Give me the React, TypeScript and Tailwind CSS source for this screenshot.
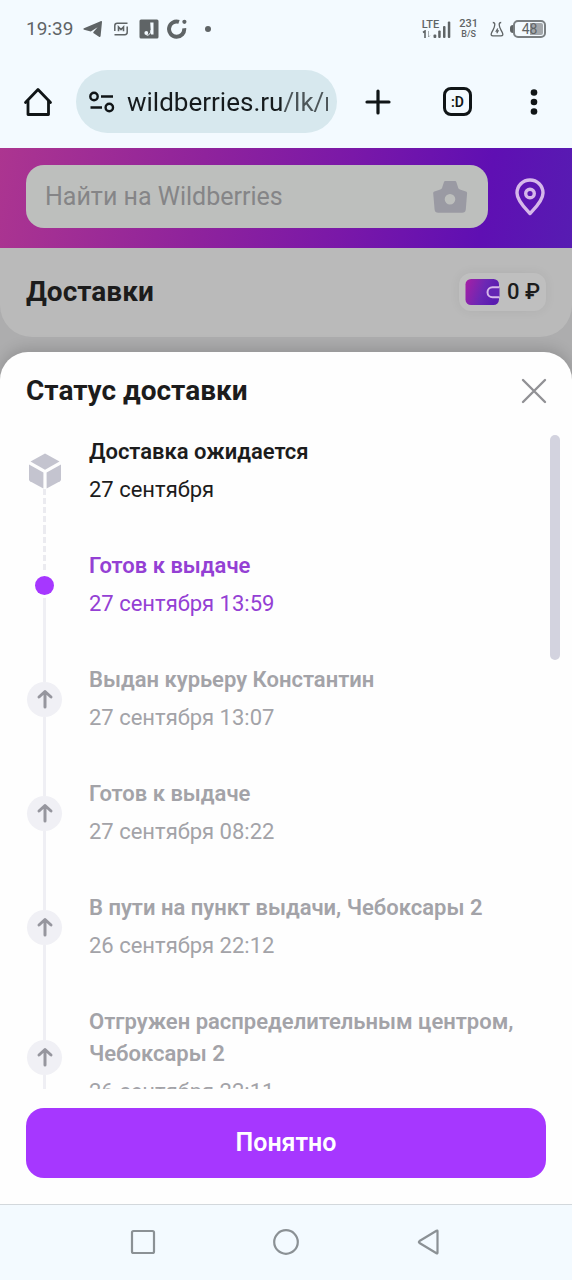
import React from "react";
import clsx from "clsx";

type StepKind = "expected" | "current" | "past";

interface Step {
  title: string;
  date: string;
  kind: StepKind;
}

const steps: Step[] = [
  { title: "Доставка ожидается", date: "27 сентября", kind: "expected" },
  { title: "Готов к выдаче", date: "27 сентября 13:59", kind: "current" },
  { title: "Выдан курьеру Константин", date: "27 сентября 13:07", kind: "past" },
  { title: "Готов к выдаче", date: "27 сентября 08:22", kind: "past" },
  { title: "В пути на пункт выдачи, Чебоксары 2", date: "26 сентября 22:12", kind: "past" },
  { title: "Отгружен распределительным центром, Чебоксары 2", date: "26 сентября 22:11", kind: "past" },
];

const StatusBar = () => (
  <div className="flex h-[58px] shrink-0 items-center justify-between px-[26px] text-[#5f6466]">
    <div className="flex items-center">
      <span className="text-[19px] leading-6">19:39</span>
      <svg className="ml-2.5 h-5 w-5" viewBox="0 0 20 20" fill="currentColor">
        <path d="M1 9.300 17.600 2.200c.7-.3 1.500.1 1.400.9L17.600 17c-.1.900-.9 1.200-1.600.8l-5.300-3.500c-.6-.4-.6-1-.1-1.500l4-4.600-6.400 4c-.5.3-.9.300-1.400.1l-5.700-1.500C.2 10.500.2 9.700 1 9.300z" />
      </svg>
      <svg className="ml-2.5 h-4 w-4" viewBox="0 0 16 16" fill="none" stroke="currentColor" strokeWidth="1.500">
        <path d="M14.500 2.300H4.200Q1.800 2.300 1.800 4.700V10M1.500 13.700h10.300q2.400 0 2.400-2.400V5.500" />
        <path d="M5.500 10.300V6l2.500 2.500L10.500 6v4.300" strokeWidth="1.600" />
      </svg>
      <svg className="ml-2.5 h-5 w-5" viewBox="0 0 20 20">
        <rect x="0.500" y="0.500" width="19" height="19" rx="1.500" fill="currentColor" />
        <path d="M11.200 3.500h3.300v12h-2.500z" fill="#f3faff" />
        <path d="M12 11c0 3.500-2 5.300-4.300 5.300" fill="none" stroke="#f3faff" strokeWidth="1" />
        <circle cx="7.300" cy="14" r="1.900" fill="#f3faff" />
      </svg>
      <svg className="ml-2 h-5 w-5" viewBox="0 0 20 20">
        <path d="M12 2.900A7.600 7.600 0 1 0 17.200 9.300" fill="none" stroke="currentColor" strokeWidth="4" />
        <circle cx="17.400" cy="2.800" r="2.100" fill="currentColor" />
      </svg>
      <span className="ml-[18px] h-[6px] w-[6px] rounded-full bg-[#5f6466]" />
    </div>
    <div className="flex items-center">
      <div className="flex items-end">
        <div className="flex flex-col">
          <span className="text-[11px] leading-[10px] font-medium">LTE</span>
          <svg className="h-2 w-3" viewBox="0 0 12 8" fill="none" stroke="currentColor">
            <path d="M1 2.500 3 1v7" strokeWidth="1.600" />
            <path d="M6.500 1v6l1.500-1.500" strokeWidth="1" opacity="0.5" />
          </svg>
        </div>
        <svg className="-ml-1.5 h-[17px] w-[18px]" viewBox="0 0 18 17" fill="currentColor">
          <rect x="0.500" y="13.500" width="2.800" height="3.500" rx="1" />
          <rect x="5.200" y="9.500" width="2.500" height="7.500" rx="1" />
          <rect x="10" y="5" width="2.500" height="12" rx="1" />
          <rect x="14.800" y="0.500" width="2.500" height="16.500" rx="1" />
        </svg>
      </div>
      <div className="ml-2 flex flex-col items-center">
        <span className="text-[11px] leading-[10px] font-medium">231</span>
        <span className="text-[9px] leading-[10px] font-medium">B/S</span>
      </div>
      <svg className="ml-3 h-4 w-3.5" viewBox="0 0 14 16" fill="none" stroke="currentColor" strokeWidth="1.300">
        <path d="M2.800 1.500c1.500 0 2 .6 2 2 0 3-1.300 4.300-3.300 8.500-.8 1.800-.2 2.800 1.500 2.800h8c1.700 0 2.300-1 1.500-2.800-2-4.200-3.300-5.500-3.300-8.500 0-1.400.5-2 2-2" />
        <path d="M7.800 7.500 6.300 10h1.800l-1.300 2.300" />
      </svg>
      <div className="ml-1.5 flex items-center">
        <span className="h-2 w-[3px] rounded-l-sm bg-[#5f6466]" />
        <span className="flex h-[18px] w-[33px] items-center justify-center rounded-[5px] border-2 border-[#7a7f82] bg-[linear-gradient(to_right,transparent_52%,#a3a7ab_52%)] bg-clip-content p-px text-[14px] leading-3">
          48
        </span>
      </div>
    </div>
  </div>
);

const BrowserBar = () => (
  <div className="flex h-[90px] shrink-0 items-center pr-[30px] pb-[3px] pl-[22px] text-[#101517]">
    <button aria-label="Home" className="shrink-0">
      <svg className="h-8 w-8" viewBox="0 0 32 32" fill="none" stroke="currentColor" strokeWidth="2.800" strokeLinecap="round" strokeLinejoin="round">
        <path d="M3.500 16.500 16 3.500l12.500 13" />
        <path d="M6 15v13.500h20.500V15" />
      </svg>
    </button>
    <label className="ml-[22px] flex h-[63px] min-w-0 flex-1 items-center rounded-full bg-[#d7e8ee] pr-[9px] pl-[13px]">
      <svg className="h-[22px] w-[26px] shrink-0" viewBox="0 0 26 22" fill="none" stroke="currentColor" strokeWidth="2.400">
        <circle cx="5" cy="5.500" r="3.700" />
        <path d="M12 5.500h12M1.500 16.500h11.500" />
        <circle cx="20.300" cy="16.500" r="3.700" />
      </svg>
      <input
        type="text"
        aria-label="Address"
        defaultValue="wildberries.ru/lk/m"
        className="ml-3 w-full min-w-0 flex-1 bg-[linear-gradient(to_right,#161b1d_77%,#4c5558_78%)] bg-clip-text text-[26px] leading-8 text-transparent outline-none"
      />
    </label>
    <button aria-label="New tab" className="ml-[27px] shrink-0">
      <svg className="h-7 w-7" viewBox="0 0 28 28" stroke="currentColor" strokeWidth="3.200" strokeLinecap="round">
        <path d="M14 3v22M3 14h22" />
      </svg>
    </button>
    <button aria-label="Tabs" className="ml-[51px] flex h-[29px] w-[29px] shrink-0 items-center justify-center rounded-[8px] border-3 border-[#101517] text-[14px] leading-4 font-semibold">
      :D
    </button>
    <button aria-label="Menu" className="ml-[54px] shrink-0">
      <svg className="h-7 w-4" viewBox="0 0 16 28" fill="currentColor">
        <circle cx="8" cy="4.500" r="3.300" />
        <circle cx="8" cy="14" r="3.300" />
        <circle cx="8" cy="23.500" r="3.300" />
      </svg>
    </button>
  </div>
);

const SiteHeader = () => (
  <header className="flex h-[100px] shrink-0 items-center bg-[linear-gradient(100deg,#ac3590_0%,#8f239c_35%,#7a18a8_60%,#5f0fb3_84%,#571cb2_100%)] pr-6 pb-[3px] pl-[26px]">
    <div className="flex h-[63px] flex-1 items-center rounded-[18px] bg-[#bdbfbd] pr-5 pl-[19px]">
      <input
        type="search"
        aria-label="Поиск"
        placeholder="Найти на Wildberries"
        className="min-w-0 flex-1 text-[25px] leading-8 outline-none placeholder:text-[#858587]"
      />
      <button aria-label="Поиск по фото">
        <svg className="h-9 w-9" viewBox="0 0 36 36">
          <path
            fillRule="evenodd"
            fill="#9a9aa3"
            d="M13.800 2h8.700c1 0 1.700.500 2 1.400l1.600 5.100c.3 1 .8 1.600 1.800 1.900l6 2c.9.300 1.300.9 1.200 1.800l-1.300 16.200c-.2 2.200-1.500 3.300-3.700 3.300H6.300c-2.200 0-3.500-1.100-3.700-3.300L1.200 14.200c-.1-.9.400-1.500 1.200-1.800l6-2c1-.3 1.500-.9 1.800-1.900l1.600-5.100c.3-.9 1-1.400 2-1.400zM18 15a5.300 5.300 0 1 0 0 10.600A5.300 5.300 0 0 0 18 15z"
          />
        </svg>
      </button>
    </div>
    <button aria-label="Пункты выдачи" className="ml-6">
      <svg className="h-10 w-9" viewBox="0 0 36 40" fill="none" stroke="#d6b8ea" strokeWidth="3.400">
        <path d="M18 36.500c4-4.500 13-12.500 13-20.500a13 13 0 0 0-26 0c0 8 9 16 13 20.500z" strokeLinejoin="round" />
        <circle cx="18" cy="16.500" r="4.300" />
      </svg>
    </button>
  </header>
);

const PageTitle = () => (
  <div className="flex h-[89px] shrink-0 items-center justify-between rounded-b-[32px] bg-[#bababa] pr-[26px] pb-[2px] pl-[26px]">
    <h1 className="text-[28px] leading-8 font-bold text-[#1c1c1c]">Доставки</h1>
    <button className="flex h-[38px] items-center gap-[6px] rounded-[12px] bg-[#bfbfbf] px-[6px] text-[22px] leading-7 font-medium text-[#1c1c1c] shadow-[0_0_12px_rgba(0,0,0,0.06)]">
      <svg className="h-[26px] w-9" viewBox="0 0 36 26">
        <defs>
          <linearGradient id="wallet" x1="0" y1="0" x2="1" y2="0.300">
            <stop offset="0" stopColor="#a81fa5" />
            <stop offset="0.600" stopColor="#6b28b4" />
            <stop offset="1" stopColor="#5a1cb0" />
          </linearGradient>
        </defs>
        <rect x="0.500" width="33.500" height="26" rx="5.500" fill="url(#wallet)" />
        <path d="M34.500 8.200H27.500a5 5 0 0 0 0 10h7" fill="#6424b4" stroke="#d6b8ea" strokeWidth="2" />
      </svg>
      0 ₽
    </button>
  </div>
);

const StepIcon = ({ kind }: { kind: StepKind }) => {
  if (kind === "expected") {
    return (
      <svg className="h-9 w-9 shrink-0" viewBox="0 0 36 36" fill="#c4c4cf">
        <path d="M18 .5 32.500 8.500 18 16.700 3.500 8.500z" />
        <path d="M2 11.500 16.400 19.600V35.500L3 28.200Q2 27.600 2 26.500z" />
        <path d="M34 11.500 19.600 19.600V35.500L33 28.200Q34 27.600 34 26.500z" />
      </svg>
    );
  }
  if (kind === "current") {
    return <span className="my-[3px] h-[19px] w-[19px] shrink-0 rounded-full bg-[#a637ff]" />;
  }
  return (
    <span className="flex h-[35px] w-[35px] shrink-0 items-center justify-center rounded-full bg-[#f0f0f5]">
      <svg className="h-5 w-5" viewBox="0 0 20 20" fill="none" stroke="#96969e" strokeWidth="3" strokeLinecap="round" strokeLinejoin="round">
        <path d="M10 18V2.500M4 8 10 2.500 16 8" />
      </svg>
    </span>
  );
};

const solidLine = "bg-[#efeff4]";
const dashedLine = "bg-[repeating-linear-gradient(to_bottom,#ebebf0_0_6px,transparent_6px_9px)]";

const TimelineItem = ({ step }: { step: Step }) => (
  <li className="flex gap-[26px]">
    <div className="flex w-[37px] shrink-0 flex-col items-center">
      <span
        className={clsx(
          "w-[3px] flex-1",
          step.kind === "current" && dashedLine,
          step.kind === "past" && solidLine
        )}
      />
      <StepIcon kind={step.kind} />
      <span className={clsx("w-[3px] flex-1", step.kind === "expected" ? dashedLine : solidLine)} />
    </div>
    <div
      className={clsx(
        "flex flex-col gap-[6px] py-[22px] text-[22px] leading-8",
        step.kind === "expected" && "text-[#1c1c1c]",
        step.kind === "current" && "text-[#9440d4]",
        step.kind === "past" && "text-[#a3a3a8]"
      )}
    >
      <p className="font-semibold">{step.title}</p>
      <p>{step.date}</p>
    </div>
  </li>
);

const DeliverySheet = () => (
  <section
    role="dialog"
    aria-labelledby="sheet-title"
    className="mt-[15px] flex min-h-0 flex-1 flex-col rounded-t-[28px] bg-[#fefefe] pb-[26px] shadow-[0_-4px_14px_rgba(0,0,0,0.15)]"
  >
    <div className="flex items-center justify-between pt-[23px] pr-[25px] pb-[7px] pl-[26px]">
      <h2 id="sheet-title" className="text-[28px] leading-8 font-bold text-[#1c1c1c]">
        Статус доставки
      </h2>
      <button aria-label="Закрыть">
        <svg className="h-[26px] w-[26px]" viewBox="0 0 26 26" stroke="#919195" strokeWidth="2.400" strokeLinecap="round">
          <path d="M2 2l22 22M24 2 2 24" />
        </svg>
      </button>
    </div>
    <div className="relative min-h-0 flex-1 overflow-hidden">
      <ul className="pr-10 pl-[26px]">
        {steps.map((step) => (
          <TimelineItem key={step.title + step.date} step={step} />
        ))}
      </ul>
      {/* scroll thumb */}
      <span className="absolute top-[21px] right-3 h-1/3 w-[10px] rounded-full bg-[#d3d3df]" />
    </div>
    <button className="mx-[26px] mt-[19px] h-[70px] shrink-0 rounded-[18px] bg-[#a637ff] text-[25px] leading-8 font-semibold text-white">
      Понятно
    </button>
  </section>
);

const NavBar = () => (
  <nav className="relative grid h-[76px] shrink-0 grid-cols-3 items-center justify-items-center border-t border-[#d3d8dc] bg-[#f3faff] px-[12.5%] pb-[2px] text-[#8b9195]">
    <button aria-label="Recent apps">
      <svg className="h-7 w-7" viewBox="0 0 28 28" fill="none" stroke="currentColor" strokeWidth="2.200">
        <rect x="3" y="3" width="22" height="22" rx="1.500" />
      </svg>
    </button>
    <button aria-label="Home screen">
      <svg className="h-7 w-7" viewBox="0 0 28 28" fill="none" stroke="currentColor" strokeWidth="2.200">
        <circle cx="14" cy="14" r="11.800" />
      </svg>
    </button>
    <button aria-label="Back">
      <svg className="h-7 w-7" viewBox="0 0 28 28" fill="none" stroke="currentColor" strokeWidth="2.200" strokeLinejoin="round">
        <path d="M22.500 3.200v21.600q0 1-1 .4L4.500 15q-1.300-1 0-2L21.500 2.800q1-.6 1 .4z" />
      </svg>
    </button>
  </nav>
);

const App = () => {
  return (
    <div className="flex h-screen flex-col overflow-hidden bg-[#f3faff] font-[Roboto,'Noto_Sans',sans-serif]">
      <StatusBar />
      <BrowserBar />
      <main className="flex min-h-0 flex-1 flex-col bg-[#adadae]">
        <SiteHeader />
        <PageTitle />
        <DeliverySheet />
      </main>
      <NavBar />
    </div>
  );
};

export default App;
